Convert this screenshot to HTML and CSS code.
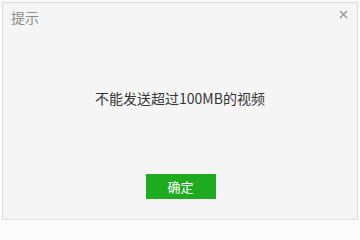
FILE: index.html
```html
<!DOCTYPE html>
<html lang="zh">
<head>
<meta charset="utf-8">
<link rel="stylesheet" href="styles.css">
</head>
<body>
<div class="window">
  <div class="header">
    <span class="title">提示</span>
    <span class="close" aria-label="close">
      <svg width="9" height="9" viewBox="0 0 9 9"><path d="M1 1L8 8M8 1L1 8" stroke="#8a8a8a" stroke-width="1.1" fill="none"/></svg>
    </span>
  </div>
  <div class="content">
    <p class="message">不能发送超过100MB的视频</p>
  </div>
  <div class="footer">
    <button class="ok">确定</button>
  </div>
</div>
</body>
</html>
```
FILE: styles.css
```css
html, body {
  margin: 0;
  padding: 0;
  background: #fbfbfb;
}
body {
  width: 360px;
  height: 224px;
  padding: 2px;
  box-sizing: border-box;
  font-family: "Noto Sans CJK SC", "Liberation Sans", sans-serif;
}
.window {
  width: 356px;
  height: 218px;
  box-sizing: border-box;
  border: 1px solid #dcdcdc;
  background: #f5f5f5;
  display: flex;
  flex-direction: column;
}
.header {
  height: 30px;
  display: flex;
  align-items: flex-start;
  justify-content: space-between;
  padding: 4px 9px 0 8px;
  box-sizing: border-box;
}
.title {
  font-size: 14px;
  line-height: 20px;
  color: #8c8c8c;
}
.close {
  display: flex;
  margin-top: 3px;
}
.content {
  flex: 1;
  display: flex;
  align-items: center;
  justify-content: center;
  padding-bottom: 12px;
}
.message {
  margin: 0;
  font-size: 14px;
  line-height: 20px;
  color: #353535;
}
.footer {
  display: flex;
  justify-content: center;
  padding-bottom: 20px;
}
.ok {
  width: 70px;
  height: 25px;
  border: none;
  background: #1fab1f;
  color: #ffffff;
  font-family: "Noto Sans CJK SC", sans-serif;
  font-size: 13px;
  padding: 0;
  margin-left: 1px;
}
```
